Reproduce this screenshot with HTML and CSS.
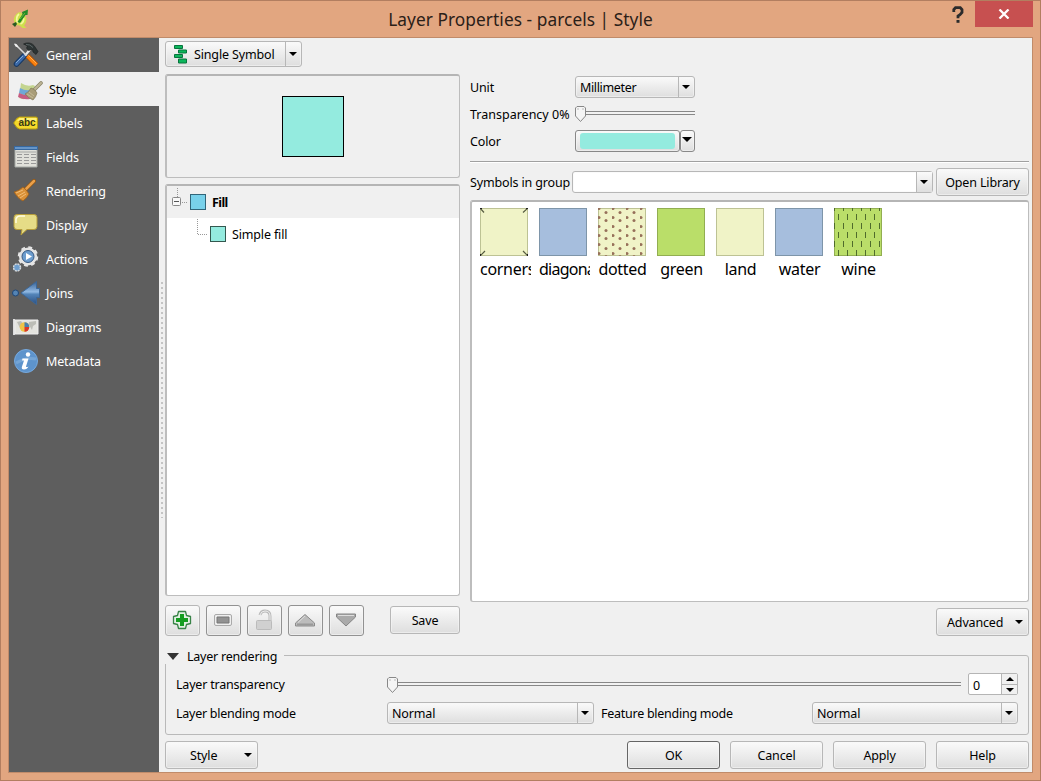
FILE: index.html
```html
<!DOCTYPE html>
<html lang="en">
<head>
<meta charset="utf-8">
<title>Layer Properties - parcels | Style</title>
<link rel="stylesheet" href="styles.css">
</head>
<body>
<div class="window">
  <header class="titlebar">
    <svg class="app-icon" width="18" height="20" viewBox="0 0 18 20"><path d="M8 3C4 4 1.500 8 2 12l1.500 4 4 .5 3 2.500h4l-2.500-2.500c2-2 3-5 2-8.500z" fill="#cfe04c"/><path d="M7 5C4.500 7 4 10 5.500 14M11.500 9c.5 3-1 5-3 6" fill="none" stroke="#f6f8a0" stroke-width="1.800"/><path d="M5.500 13l5-8-.5-2 6-2.500-.5 5.500-2 0-5.500 8z" fill="#238b27"/><path d="M8 10l5-6" stroke="#67b83c"/><path d="M0 15l4-2 1 2-2 3z" fill="#285b22"/></svg>
    <h1>Layer Properties - parcels | Style</h1>
    <svg class="help-mark" width="12" height="18" viewBox="0 0 12 18"><path d="M1.800 6V3.500L3.500 1.700h4.800L10 3.500v3L8 8.700 6 10v2.300" fill="none" stroke="#2b2b2b" stroke-width="2.800"/><path d="M4.500 14h3v2.800h-3z" fill="#2b2b2b"/></svg>
    <div class="close"><svg width="12" height="10" viewBox="0 0 12 10"><path d="M1.500.5l9 9M10.500.5l-9 9" stroke="#fff" stroke-width="2.300"/></svg></div>
  </header>
  <div class="client">
    <nav class="sidebar">
      <div class="item"><svg class="ico" width="26" height="26" viewBox="0 0 26 26"><path d="M11 14L3.500 22" stroke="#173863" stroke-width="5.500" stroke-linecap="round"/><path d="M11 14L3.500 22" stroke="#3c6aa8" stroke-width="3.500" stroke-linecap="round"/><path d="M10 14l-7 7" stroke="#82a9d6"/><path d="M17.500 7L12 13.500" stroke="#e8e8e8" stroke-width="2.200"/><path d="M2 2l11.500 11.500" stroke="#d8d8d8" stroke-width="1.600"/><path d="M1 1.500l3 1 1.500 3-3-1z" fill="#f0f0f0"/><path d="M10.500 2c4-2 9-1.500 11.500 3l3 4.500-2 3-3-2.500-.5-2.500-4 1-2-2.500 1-2z" fill="#2d3434" stroke="#171b1b" stroke-width=".6"/><path d="M13 2.500q4-.5 7 3" stroke="#5c6666" fill="none"/><path d="M14.500 14l9 9" stroke="#b04c00" stroke-width="5"/><path d="M14.500 14l9 9" stroke="#fa810f" stroke-width="3.500"/><path d="M15.500 13.500l8 8" stroke="#ffb154"/></svg>General</div>
      <div class="item active"><svg class="ico" width="26" height="20" viewBox="0 0 26 20"><path d="M4 2q6 4 12 2l2 1-3 10Q8 20 2 17z" fill="#c4d590"/><path d="M3 7q7 4 13 1l-1 5q-6 3-13-1z" fill="#6fa7d6"/><path d="M2 12q6 3 12 2l-1 4q-7 1-12-2z" fill="#c65c82"/><path d="M17 9l7-7" stroke="#8a8468" stroke-width="3.600" stroke-linecap="round"/><path d="M17 9l7-7" stroke="#bdb596" stroke-width="2.200" stroke-linecap="round"/><path d="M14 7q4 1 6 5-1 4-4 7-5-2-8-6 4-2 6-6z" fill="#a99d78" stroke="#827858" stroke-width=".7"/><path d="M10 13l6 4M12 11l5 4" stroke="#cbc19f" stroke-width=".8"/></svg>Style</div>
      <div class="item"><svg class="ico" width="26" height="14" viewBox="0 0 26 14"><path d="M6.500 1h16.500q1.500 0 1.500 1.500v9q0 1.500-1.500 1.500H6.500Q4 13 .7 7 4 1 6.500 1z" fill="#f4d92b" stroke="#b49b13"/><path d="M6.500 2h17v3H4z" fill="#fff075"/><text x="5.500" y="10" class="abc" textLength="17">abc</text></svg>Labels</div>
      <div class="item"><svg class="ico" width="26" height="22" viewBox="0 0 26 22"><path d="M2 1h22v20H2z" fill="#e0e0da" stroke="#a6aaa6"/><path d="M1.500.5h23v3h-23z" fill="#6695c8" stroke="#3668a0"/><path d="M2.500 5h21v2h-21z" fill="#c2c3bf"/><path d="M4 8.500h19M4 11.500h19M4 14.500h19M4 17.500h19" stroke="#999" stroke-dasharray="5 2"/></svg>Fields</div>
      <div class="item"><svg class="ico" width="26" height="24" viewBox="0 0 26 24"><path d="M12 11l9-9" stroke="#935715" stroke-width="4" stroke-linecap="round"/><path d="M12 11l9-9" stroke="#eaa04a" stroke-width="2.500" stroke-linecap="round"/><path d="M10 8q3 2 6 7-2 4-6 7-5-2-9-9 5-1 9-5z" fill="#d99036" stroke="#9c5e1c" stroke-width=".8"/><path d="M3 14l7-3M5 17l7-4M7 19l6-4" stroke="#f4c17d" stroke-width=".9"/></svg>Rendering</div>
      <div class="item"><svg class="ico" width="26" height="24" viewBox="0 0 26 24"><path d="M4 1.500h17q3 0 3 3v9q0 3-3 3h-7l-6 5.500 1-5.500H4q-3 0-3-3v-9q0-3 3-3z" fill="#e6dc87" stroke="#b59c3a"/><path d="M3 10V6q1-3 4-3h5" fill="none" stroke="#fffce0" stroke-width="1.500"/></svg>Display</div>
      <div class="item"><svg class="ico" width="26" height="26" viewBox="0 0 26 26"><circle cx="15" cy="10.500" r="9" fill="#e5e5e5" stroke="#e5e5e5" stroke-width="2.500" stroke-dasharray="3.800 3.270"/><circle cx="15" cy="10.500" r="8.500" fill="#e4e4e4"/><circle cx="15" cy="10.500" r="6" fill="#6d9dce" stroke="#365881"/><path d="M13 7v7l6-3.500z" fill="#fff"/><circle cx="4" cy="21.500" r="3.500" fill="#6f9fce" stroke="#d4d9dd" stroke-width="1.500" stroke-dasharray="2 .75"/></svg>Actions</div>
      <div class="item"><svg class="ico joins-icon" width="29" height="26" viewBox="0 0 29 26"><defs><linearGradient id="blue" x2="0" y2="1"><stop stop-color="#345f93"/><stop offset=".45" stop-color="#91b9e3"/><stop offset=".55" stop-color="#5485b9"/><stop offset="1" stop-color="#294f83"/></linearGradient></defs><path d="M9 13L24.500 1.500V8.500h3v9h-3v7z" fill="url(#blue)" stroke="#3c6797"/><circle cx="3.500" cy="13" r="3" fill="#5484b4" stroke="#204777"/></svg>Joins</div>
      <div class="item"><svg class="ico" width="26" height="18" viewBox="0 0 26 18"><path d="M1 1v16" stroke="#ddd" stroke-width="2"/><path d="M2 2h23v14H2z" fill="#e4e4df" stroke="#eee"/><path d="M4 4l4-1 2 3-3 4zM16 4l7-1v3l-3 2-1 4-3-5z" fill="#bcbdb6"/><circle cx="11.500" cy="9" r="4.800" fill="#efc345"/><path d="M11.500 9V4.200a4.800 4.800 0 0 1 4.800 4.800z" fill="#477fae"/><path d="M11.500 9h4.800a4.800 4.800 0 0 1-4.800 4.800z" fill="#d93629"/></svg>Diagrams</div>
      <div class="item"><svg class="ico" width="26" height="26" viewBox="0 0 26 26"><circle cx="13" cy="13" r="11.500" fill="#5e94cc" stroke="#77a9dd"/><path d="M3 15q10-6 20-4" stroke="#75a5d5" stroke-width="3" fill="none"/><circle cx="15" cy="6.500" r="2.200" fill="#fff"/><path d="M9.500 10.500h6l-2.500 8q0 1 2.500 0-1.500 3-4.500 3-3 0-2-3l2-6H9z" fill="#fff"/></svg>Metadata</div>
    </nav>
    <div class="splitter"></div>
    <main class="content">
      <div class="combo-button"><svg width="14" height="20" viewBox="0 0 14 20"><path d="M.5 1.500h8v3h-8zM4.500 6h8v3h-8zM.5 10.500h8v3h-8zM4.500 15h8v4h-8z" fill="#0cb65b" stroke="#07743d"/></svg><span>Single Symbol</span><i class="drop"><b class="tri"></b></i></div>
      <div class="panels">
        <section class="left">
          <div class="frame preview"><div class="preview-swatch"></div></div>
          <div class="frame tree">
            <div class="tree-row root"><svg width="22" height="30" viewBox="0 0 22 30"><path d="M10.500 1v9M15 15.500h6" stroke="#999" stroke-dasharray="1 1"/><rect x="5.500" y="10.500" width="8" height="8" rx="1" fill="#f8f8f8" stroke="#888"/><path d="M7 14.500h5" stroke="#555"/></svg><i class="chip blue"></i><strong>Fill</strong></div>
            <div class="tree-row child"><svg width="12" height="32" viewBox="0 0 12 32"><path d="M1.500 1v15.500H11" fill="none" stroke="#999" stroke-dasharray="1 1"/></svg><i class="chip mint"></i><span>Simple fill</span></div>
          </div>
          <div class="tools">
            <div class="btn tool"><svg width="20" height="20" viewBox="0 0 20 20"><path d="M6.500 1.500h7L14.500 5.500l4 1v7l-4 1-1 4h-7l-1-4-4-1v-7l4-1z" fill="#e2f1e3" stroke="#398348" stroke-width="1.300" stroke-linejoin="round"/><path d="M10 4v12M4 10h12" stroke="#149d20" stroke-width="4"/></svg></div>
            <div class="btn tool dark"><svg width="20" height="20" viewBox="0 0 20 20"><rect x="1.500" y="4.500" width="17" height="11" rx="1.500" fill="#eee" stroke="#aaa"/><path d="M4 7h12v6H4z" fill="#929292" stroke="#777"/></svg></div>
            <div class="btn tool dark"><svg width="20" height="22" viewBox="0 0 20 22"><path d="M6 6q1-4 5-4 5 0 5 5v5" fill="none" stroke="#b9b9b9" stroke-width="3"/><path d="M6 6q1-4 5-4 5 0 5 5v5" fill="none" stroke="#eee"/><rect x="2.500" y="11.500" width="15" height="9" rx="1" fill="#d0d0d0" stroke="#bbb"/></svg></div>
            <div class="btn tool dark"><svg width="22" height="20" viewBox="0 0 22 20"><path d="M11 4.500L20.500 13v3h-19v-3z" fill="#bcbcbc" stroke="#8b8b8b" stroke-linejoin="round"/><path d="M3 14.500h16" stroke="#999" stroke-width="2"/><path d="M11 6l-7 6.500" stroke="#ddd"/></svg></div>
            <div class="btn tool dark"><svg width="22" height="20" viewBox="0 0 22 20"><path d="M1.500 4h19v3L11 16 1.500 7z" fill="#aaa" stroke="#858585" stroke-linejoin="round"/><path d="M3 5.500h16" stroke="#ddd"/></svg></div>
            <div class="btn save">Save</div>
          </div>
        </section>
        <section class="right">
          <div class="form">
            <label>Unit</label><div class="select"><span>Millimeter</span><i class="drop"><b class="tri"></b></i></div>
            <label class="percent">Transparency 0%</label><div class="slider"><svg width="12" height="16" viewBox="0 0 12 16"><path d="M2 .5h7L10.500 2v8l-5 5.500-5-5.500V2z" fill="#f5f5f5" stroke="#888"/><path d="M2 3h2M7 3h2" stroke="#bbb"/></svg></div>
            <label>Color</label><div class="color"><div class="color-main"><i></i></div><div class="color-drop"><b class="tri"></b></div></div>
          </div>
          <div class="rule"></div>
          <div class="group-row"><label>Symbols in group</label><div class="select editable"><span></span><i class="drop"><b class="tri"></b></i></div><div class="btn">Open Library</div></div>
          <div class="frame symbols">
            <figure><svg width="48" height="48"><rect class="sw cream" x=".5" y=".5" width="47" height="47"/><path d="M0 0l4 4.500M48 0l-5 4.500M0 48l5-5M48 48l-5-5" stroke="#555b40" stroke-width="1.200"/><path d="M0 0h2v1H0zM46 0h2v1h-2zM0 46h1v2H0zM47 46h1v2h-1z" fill="#222"/></svg><figcaption class="clipped">corners</figcaption></figure>
            <figure><svg width="48" height="48"><rect class="sw water" x=".5" y=".5" width="47" height="47"/></svg><figcaption class="clipped tight">diagonal</figcaption></figure>
            <figure><svg width="48" height="48"><defs><pattern id="dots" width="14" height="18" patternUnits="userSpaceOnUse" y="-4"><circle cx="1" cy="4.500" r="1.500" fill="#96705a"/><circle cx="8" cy="8.500" r="1.500" fill="#96705a"/><circle cx="1" cy="13.500" r="1.500" fill="#96705a"/><circle cx="8" cy="16.500" r="1.500" fill="#96705a"/></pattern></defs><rect class="sw cream" x=".5" y=".5" width="47" height="47"/><path d="M0 0h48v48H0z" fill="url(#dots)"/></svg><figcaption>dotted</figcaption></figure>
            <figure><svg width="48" height="48"><rect class="sw green" x=".5" y=".5" width="47" height="47"/></svg><figcaption>green</figcaption></figure>
            <figure><svg width="48" height="48"><rect class="sw cream" x=".5" y=".5" width="47" height="47"/></svg><figcaption>land</figcaption></figure>
            <figure><svg width="48" height="48"><rect class="sw water" x=".5" y=".5" width="47" height="47"/></svg><figcaption>water</figcaption></figure>
            <figure><svg width="48" height="48"><defs><pattern id="vines" width="9" height="18" patternUnits="userSpaceOnUse"><path d="M.5 0v3M.5 15v3M4.500 6v6" stroke="#4f6c2c" stroke-width="1"/></pattern></defs><rect class="sw green" x=".5" y=".5" width="47" height="47"/><path d="M0 0h48v48H0z" fill="url(#vines)"/></svg><figcaption>wine</figcaption></figure>
          </div>
          <div class="btn menu advanced"><span>Advanced</span><b class="tri"></b></div>
        </section>
      </div>
      <fieldset class="rendering">
        <legend><b></b><span>Layer rendering</span></legend>
        <div class="transparency-row"><label>Layer transparency</label><div class="slider"><svg width="12" height="16" viewBox="0 0 12 16"><path d="M2 .5h7L10.500 2v8l-5 5.500-5-5.500V2z" fill="#f5f5f5" stroke="#888"/><path d="M2 3h2M7 3h2" stroke="#bbb"/></svg></div><div class="spin"><span>0</span><div class="arrows"><i><b class="tri up"></b></i><i><b class="tri"></b></i></div></div></div>
        <div class="blend-row"><label>Layer blending mode</label><div class="select"><span>Normal</span><i class="drop"><b class="tri"></b></i></div><label class="feature">Feature blending mode</label><div class="select"><span>Normal</span><i class="drop"><b class="tri"></b></i></div></div>
      </fieldset>
      <footer><div class="btn menu style-menu"><span>Style</span><b class="tri"></b></div><div class="btn default">OK</div><div class="btn">Cancel</div><div class="btn">Apply</div><div class="btn">Help</div></footer>
    </main>
  </div>
</div>
</body>
</html>
```
FILE: styles.css
```css
* { box-sizing: border-box; }
body { margin: 0; font: 12.5px/18px "Noto Sans", sans-serif; letter-spacing: -.15px; color: #000; overflow: hidden; }
svg { display: block; flex: none; }
i { font-style: normal; }
.window { width: 1041px; height: 781px; padding: 0 7px 7px; border: 1px solid #b27e60; background: #e2a680; display: flex; flex-direction: column; }
.titlebar { height: 36px; flex: none; position: relative; display: flex; justify-content: center; }
.titlebar h1 { margin: 6px 0 0; font: 17.3px/26px "Noto Sans", sans-serif; letter-spacing: .06px; color: #2b2018; }
.app-icon { position: absolute; left: 4px; top: 8px; }
.help-mark { position: absolute; right: 69px; top: 5px; }
.close { position: absolute; right: 0; top: 0; width: 58px; height: 26px; background: #c75050; display: flex; align-items: center; justify-content: center; }
.close svg { margin-right: 1px; }
.client { height: 736px; flex: none; border: 1px solid #c08b6a; background: #f0f0f0; display: flex; }
.sidebar { width: 150px; flex: none; background: #5e5e5e; }
.item { height: 34px; padding: 2px 0 0 4px; display: flex; align-items: center; gap: 7px; color: #fff; }
.item .ico { width: 26px; margin-top: -3px; }
.item .joins-icon { width: 29px; margin-left: -1px; margin-right: -2px; }
.item.active { background: #f0f0f0; color: #000; padding-left: 8px; gap: 6px; }
.item.active .ico { margin-top: 2px; }
.abc { font: bold 10px "Liberation Sans", sans-serif; fill: #393b15; }
.splitter { width: 6px; flex: none; margin: 243px 0 254px; background: radial-gradient(circle at 3px 2px, #c4c4c4 1px, transparent 1.5px) 0 0 / 6px 5px; }
.content { flex: 1; min-width: 0; padding: 3px 3px 3px 0; display: flex; flex-direction: column; }
.btn, .select, .combo-button, .color-main, .color-drop { border: 1px solid #b7b7b7; border-radius: 3px; background: linear-gradient(#fafafa, #dedede); box-shadow: inset 0 0 0 1px #f7f7f788; }
.btn { width: 93px; height: 28px; flex: none; display: flex; align-items: center; justify-content: center; padding-top: 2px; }
.combo-button { height: 26px; width: 137px; padding-left: 8px; display: flex; align-items: center; }
.combo-button > span { flex: 1; padding: 2px 0 0 6px; white-space: nowrap; }
.drop { width: 16px; align-self: stretch; border-left: 1px solid #b7b7b7; display: flex; align-items: center; justify-content: center; }
.drop .tri { margin-left: -1px; }
.tri { width: 0; height: 0; border: 4px solid transparent; border-top-color: #000; border-bottom: 0; }
.tri.up { border: 4px solid transparent; border-bottom-color: #000; border-top: 0; }
.panels { height: 562px; margin-top: 7px; display: flex; gap: 10px; }
.left { width: 295px; display: flex; flex-direction: column; }
.right { width: 559px; display: flex; flex-direction: column; }
.frame { border: 2px solid #bdbdbd; border-top-color: #b5b5b5; border-right-width: 1px; border-bottom-width: 1px; border-radius: 3px; }
.preview { height: 104px; display: grid; place-items: center; }
.preview-swatch { width: 62px; height: 61px; margin-right: 0; border: 1px solid #000; background: #94ebdf; }
.tree { height: 412px; margin-top: 6px; background: #fff; overflow: hidden; }
.tree-row { height: 32px; display: flex; align-items: center; }
.tree-row strong, .tree-row span { padding-top: 1px; }
.tree-row.root { background: #f0f0f0; }
.tree-row.child { padding-left: 29px; }
.chip { width: 16px; height: 16px; border: 1px solid #316579; background: #78d1ea; margin: 0 6px 0 1px; }
.chip.mint { background: #94ebdf; border-color: #34584f; margin-left: 2px; }
.tree-row strong { letter-spacing: -.6px; }
.tools { margin-top: 8px; display: flex; gap: 6px; align-items: center; }
.tool { width: 35px; height: 31px; padding: 0 1px 1px 0; margin-top: 1px; }
.tool.dark { border-color: #929292; }
.save { width: 70px; margin-left: auto; }
.form { height: 87px; display: grid; grid-template-columns: 105px 120px; grid-template-rows: 27px 27px 27px; align-items: center; }
.form label { white-space: nowrap; }
.form .percent { letter-spacing: 0; }
.form .select, .form .color { margin-top: -2px; }
.form .slider { margin-top: -2px; }
.select { height: 22px; display: flex; align-items: center; }
.select span { flex: 1; padding: 2px 0 0 4px; }
.form .select span { letter-spacing: -.35px; }
.select.editable { flex: 1; background: #fff; }
.editable .drop { background: linear-gradient(#fafafa, #dedede); }
.slider { height: 16px; flex: 1; background: linear-gradient(#888 1px, #f2f2f2 1px, #f2f2f2 3px, #888 3px) no-repeat 0 5px / 100% 4px; }
.color { display: flex; height: 22px; }
.color-main { width: 105px; padding: 2px 4px; border-color: #888; }
.color-main i { display: block; height: 16px; border-radius: 3px; background: #94ebdf; }
.color-drop { width: 15px; border-color: #888; display: flex; justify-content: center; padding-top: 6px; }
.color-drop .tri { border-width: 5px 5px 0; margin-left: -1px; }
.rule { height: 2px; border-top: 1px solid #a0a0a0; background: #fff; }
.group-row { display: flex; height: 28px; margin-top: 5px; align-items: center; }
.group-row label { width: 102px; white-space: nowrap; padding-top: 2px; }
.group-row .btn { margin-left: 3px; }
.symbols { margin-top: 4px; height: 402px; background: #fff; display: flex; padding: 6px 0 0 8px; gap: 8px; }
.symbols figure { margin: 0; width: 51px; overflow: hidden; height: 72px; }
.symbols figcaption { width: 49px; font-size: 16px; line-height: 24px; letter-spacing: -.3px; margin-top: 1px; display: flex; justify-content: center; }
.symbols .clipped { justify-content: flex-start; }
.symbols .tight { letter-spacing: -.75px; }
.sw { stroke-width: 1; }
.cream { fill: #f0f3c7; stroke: #bdc294; }
.water { fill: #a6bedd; stroke: #7e95a9; }
.green { fill: #bade69; stroke: #92ae51; }
.menu { justify-content: flex-start; padding-left: 10px; }
.menu span { flex: 1; }
.menu .tri { margin: -2px 5px 0 0; }
.advanced { align-self: flex-end; margin-top: 6px; }
.rendering { margin: 10px 0 0; height: 89px; border: 1px solid #b9b9b9; border-radius: 3px; padding: 0 10px; min-width: 0; }
.rendering legend { margin-left: -11px; padding-right: 7px; padding-left: 2px; display: flex; height: 18px; align-items: center; background: #f0f0f0; width: 119px; white-space: nowrap; }
.rendering legend b { border: solid transparent; border-width: 7px 6px 0; border-top-color: #333; margin: 3px 8px 0 0; }
.rendering legend span { padding-top: 3px; letter-spacing: -.22px; }
.transparency-row { height: 22px; margin-top: 9px; display: flex; align-items: center; }
.transparency-row label, .blend-row label { width: 211px; flex: none; padding-top: 2px; letter-spacing: -.26px; }
.transparency-row .slider { margin-top: 1px; }
.transparency-row label { letter-spacing: -.2px; }
.spin { width: 50px; height: 22px; border: 1px solid #b5b5b5; border-radius: 2px; background: #fff; margin-left: 7px; display: flex; }
.spin > span { flex: 1; padding-left: 4px; line-height: 23px; }
.arrows { width: 16px; display: grid; grid-template-rows: 10px 10px; }
.arrows i { background: #f0f0f0; border-left: 1px solid #b5b5b5; display: grid; place-items: center; }
.arrows i + i { border-top: 1px solid #b5b5b5; }
.blend-row { display: flex; align-items: center; margin-top: 6px; }
.blend-row .select { width: 207px; flex: none; margin-top: 1px; }
.blend-row label.feature { width: 218px; padding-left: 7px; }
.blend-row .feature + .select { width: 206px; }
footer { margin-top: 6px; display: flex; gap: 10px; }
.style-menu { margin-right: auto; padding-left: 24px; }
.default { border-color: #666; }
```
